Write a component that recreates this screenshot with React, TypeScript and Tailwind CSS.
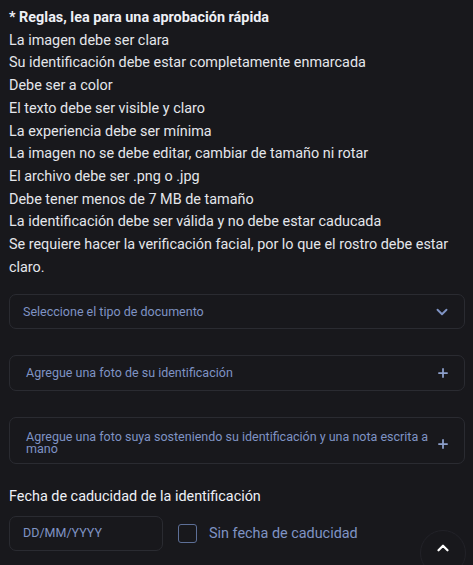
import { ChevronDown, ChevronUp, Plus } from "lucide-react";

const rules = [
    "La imagen debe ser clara",
    "Su identificación debe estar completamente enmarcada",
    "Debe ser a color",
    "El texto debe ser visible y claro",
    "La experiencia debe ser mínima",
    "La imagen no se debe editar, cambiar de tamaño ni rotar",
    "El archivo debe ser .png o .jpg",
    "Debe tener menos de 7 MB de tamaño",
    "La identificación debe ser válida y no debe estar caducada",
    "Se requiere hacer la verificación facial, por lo que el rostro debe estar claro.",
];

export default function App() {
    return (
        <div
            className="min-h-[565px] w-[473px] overflow-hidden bg-[#18181c] text-[#e4e6eb] relative"
            style={{ fontFamily: "Roboto, 'Liberation Sans', sans-serif" }}
        >
            <div className="pl-[9px] pr-[8px] pt-[7px]">
                {/* Rules */}
                <div className="text-[14.4px] leading-[22.7px]">
                    <p className="font-bold text-[#eef0f6]">* Reglas, lea para una aprobación rápida</p>
                    {rules.map((r) => (
                        <p key={r}>{r}</p>
                    ))}
                </div>

                {/* Document type select */}
                <div className="mt-[15px] h-[35px] rounded-[7px] border border-[#2a2b31] flex items-center justify-between pl-[13px] pr-[13px]">
                    <span className="text-[12.5px] text-[#7f93c4]">Seleccione el tipo de documento</span>
                    <ChevronDown className="w-[18px] h-[18px] text-[#7f93c4]" strokeWidth={2.5} />
                </div>

                {/* Upload id */}
                <div className="mt-[26px] h-[36px] rounded-[7px] border border-[#2a2b31] flex items-center justify-between pl-[16px] pr-[14px]">
                    <span className="text-[12.5px] text-[#7f93c4]">Agregue una foto de su identificación</span>
                    <Plus className="w-[14px] h-[14px] text-[#8da0cc]" strokeWidth={3} />
                </div>

                {/* Upload selfie */}
                <div className="mt-[26px] h-[47px] rounded-[7px] border border-[#2a2b31] flex items-center justify-between pl-[16px] pr-[14px]">
                    <span className="text-[12.5px] leading-[12px] text-[#7f93c4] pt-[4px] w-[410px]">
                        Agregue una foto suya sosteniendo su identificación y una nota escrita a mano
                    </span>
                    <Plus className="w-[14px] h-[14px] text-[#8da0cc] mt-[6px]" strokeWidth={3} />
                </div>

                {/* Expiry date */}
                <p className="mt-[22px] text-[14.4px] text-[#eef0f6]">Fecha de caducidad de la identificación</p>
                <div className="mt-[8px] flex items-center">
                    <div className="w-[154px] h-[35px] rounded-[7px] border border-[#2a2b31] flex items-center pl-[13px]">
                        <span className="text-[12.5px] text-[#7f93c4]">DD/MM/YYYY</span>
                    </div>
                    <div className="ml-[15px] w-[19px] h-[19px] rounded-[3px] border-[1.5px] border-[#5d6f97]" />
                    <span className="ml-[12px] text-[14.4px] text-[#7f93c4]">Sin fecha de caducidad</span>
                </div>
            </div>

            {/* Scroll to top */}
            <div className="absolute left-[420px] top-[530px] w-[46px] h-[46px] rounded-full border border-[#222228] bg-[#18181c] flex items-center justify-center">
                <ChevronUp className="w-[18px] h-[18px] text-white -mt-[10px]" strokeWidth={3} />
            </div>
        </div>
    );
}
